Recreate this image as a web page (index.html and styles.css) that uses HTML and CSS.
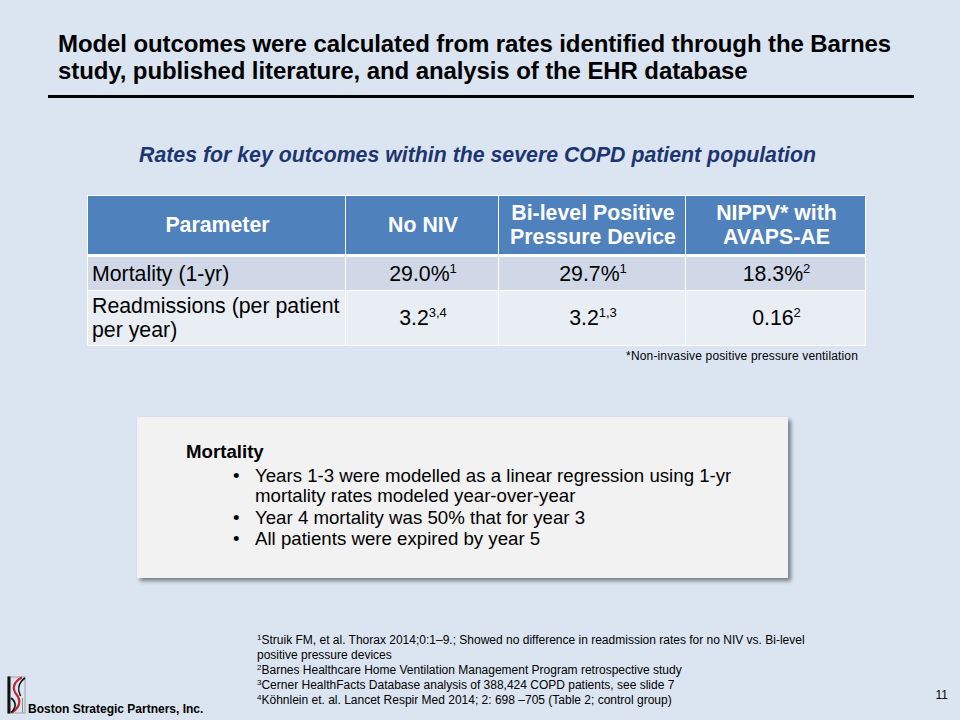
FILE: index.html
```html
<!DOCTYPE html>
<html lang="en">
<head>
<meta charset="utf-8">
<title>Model outcomes</title>
<link rel="stylesheet" href="styles.css">
</head>
<body>
<div class="slide">
  <h1 class="title">Model outcomes were calculated from rates identified through the Barnes<br>study, published literature, and analysis of the EHR database</h1>
  <div class="rule"></div>
  <h2 class="subtitle">Rates for key outcomes within the severe COPD patient population</h2>

  <div class="table-wrap">
    <table class="rates">
      <colgroup>
        <col class="c1"><col class="c2"><col class="c3"><col class="c4">
      </colgroup>
      <thead>
        <tr class="head">
          <th>Parameter</th>
          <th>No NIV</th>
          <th>Bi-level Positive<br>Pressure Device</th>
          <th>NIPPV* with<br>AVAPS-AE</th>
        </tr>
      </thead>
      <tbody>
        <tr class="r1">
          <td class="label">Mortality (1-yr)</td>
          <td>29.0%<sup>1</sup></td>
          <td>29.7%<sup>1</sup></td>
          <td>18.3%<sup>2</sup></td>
        </tr>
        <tr class="r2">
          <td class="label">Readmissions (per patient<br>per year)</td>
          <td>3.2<sup>3,4</sup></td>
          <td>3.2<sup>1,3</sup></td>
          <td>0.16<sup>2</sup></td>
        </tr>
      </tbody>
    </table>
    <p class="table-note">*Non-invasive positive pressure ventilation</p>
  </div>

  <div class="callout">
    <p class="callout-head">Mortality</p>
    <ul class="callout-list">
      <li>Years 1-3 were modelled as a linear regression using 1-yr mortality rates modeled year-over-year</li>
      <li>Year 4 mortality was 50% that for year 3</li>
      <li>All patients were expired by year 5</li>
    </ul>
  </div>

  <footer class="footer">
    <div class="brand">
      <svg class="logo" width="19" height="38" viewBox="0 0 19 38" aria-hidden="true">
        <rect x="1" y="1" width="17" height="36" fill="none" stroke="#a0a0a0" stroke-width="1"/>
        <rect x="0.5" y="0.5" width="3" height="37" fill="#111"/>
        <path d="M15 1.5 C6 6, 5 13, 9.5 18.5 C14 24, 13.5 31, 5 36.5" fill="none" stroke="#c1272d" stroke-width="2.2"/>
        <path d="M18 2 C11 7, 10.5 14, 13.5 20" fill="none" stroke="#111" stroke-width="1.6"/>
        <path d="M4 22 C9.5 26, 9.5 32, 4 36.5" fill="none" stroke="#111" stroke-width="1.6"/>
        <path d="M15.5 22 L15.5 36.5" fill="none" stroke="#8a8a8a" stroke-width="1"/>
      </svg>
      <span class="brand-name">Boston Strategic Partners, Inc.</span>
    </div>
    <div class="refs">
      <sup>1</sup>Struik FM, et al. Thorax 2014;0:1–9.; Showed no difference in readmission rates for no NIV vs. Bi-level<br>
      positive pressure devices<br>
      <sup>2</sup>Barnes Healthcare Home Ventilation Management Program retrospective study<br>
      <sup>3</sup>Cerner HealthFacts Database analysis of 388,424 COPD patients, see slide 7<br>
      <sup>4</sup>Köhnlein et. al. Lancet Respir Med 2014; 2: 698 –705 (Table 2; control group)
    </div>
    <div class="page-num">11</div>
  </footer>
</div>
</body>
</html>
```

FILE: styles.css
```css
* { box-sizing: border-box; }

html, body {
  margin: 0;
  padding: 0;
  background: #dbe5f1;
}

.slide {
  width: 960px;
  height: 720px;
  overflow: hidden;
  display: flex;
  flex-direction: column;
  font-family: "Liberation Sans", Arial, sans-serif;
  color: #000;
}

.title {
  margin: 30px 0 0 58px;
  font-size: 24px;
  line-height: 27px;
  font-weight: bold;
  white-space: nowrap;
  letter-spacing: -0.1px;
}

.rule {
  margin: 11px 0 0 48px;
  width: 866px;
  height: 3px;
  background: #000;
  flex: none;
}

.subtitle {
  margin: 45px 0 0 0;
  padding-right: 5px;
  text-align: center;
  font-size: 21.3px;
  line-height: 24px;
  font-weight: bold;
  font-style: italic;
  color: #1d3570;
}

.table-wrap {
  margin: 28px 0 0 87px;
  width: 778px;
}

.rates {
  width: 778px;
  table-layout: fixed;
  border-collapse: collapse;
  font-size: 21.3px;
}

.c1 { width: 258px; }
.c2 { width: 153px; }
.c3 { width: 187px; }
.c4 { width: 180px; }

.rates th,
.rates td {
  border: 1px solid #fff;
  padding: 0 2px 0 4px;
  text-align: center;
  vertical-align: middle;
}

.rates th {
  background: #4f81bd;
  color: #fff;
  font-weight: bold;
  line-height: 24px;
  border-bottom: 3px solid #fff;
}

.head { height: 60px; }

.rates td {
  line-height: 24px;
  color: #000;
}

.rates td.label { text-align: left; }

.r1 td { background: #d0d8e8; height: 35px; }
.r2 td { background: #e9edf4; height: 55px; }

.rates sup {
  font-size: 13px;
  line-height: 0;
  vertical-align: 8px;
}

.table-note {
  margin: 3px 0 0 0;
  padding-right: 7px;
  text-align: right;
  font-size: 12px;
  line-height: 14px;
  letter-spacing: 0.15px;
}

.callout {
  margin: 54px 0 0 137px;
  width: 651px;
  height: 161px;
  flex: none;
  background: #f2f2f2;
  box-shadow: 3px 3px 4px rgba(0, 0, 0, 0.45);
  padding: 25px 30px 0 49px;
  font-size: 18.67px;
  line-height: 20px;
}

.callout-head {
  margin: 0;
  font-weight: bold;
}

.callout-list {
  list-style: none;
  margin: 4px 0 0 0;
  padding: 0 0 0 69px;
}

.callout-list li {
  position: relative;
  margin-top: 1.5px;
}

.callout-list li::before {
  content: "\2022";
  position: absolute;
  left: -22px;
  top: 0;
}

.footer {
  margin-top: auto;
  margin-bottom: 5px;
  display: flex;
  align-items: flex-end;
  padding-left: 7px;
}

.brand {
  width: 250px;
  flex: none;
  display: flex;
  align-items: flex-end;
  gap: 2px;
}

.logo { display: block; margin-bottom: 1px; }

.brand-name {
  font-size: 12px;
  line-height: 14px;
  font-weight: bold;
  white-space: nowrap;
  margin-bottom: -1px;
}

.refs {
  flex: 1;
  font-size: 12px;
  line-height: 15px;
  white-space: nowrap;
  margin-bottom: 7px;
}

.refs sup {
  font-size: 8px;
  line-height: 0;
  vertical-align: 4px;
}

.page-num {
  flex: none;
  font-size: 12px;
  line-height: 14px;
  margin: 0 12px 13px 0;
}
```
